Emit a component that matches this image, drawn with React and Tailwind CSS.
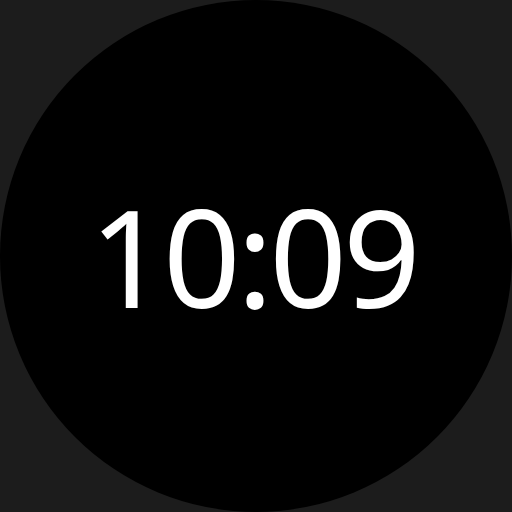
export default function App() {
  return (
    <div className="w-[512px] h-[512px] bg-[#1c1c1c] flex items-center justify-center">
      <div className="w-[512px] h-[512px] rounded-full bg-black flex items-center justify-center">
        <span className="text-white text-[136px] leading-none font-normal tracking-[-4px] pr-[6px]" style={{ fontFamily: '"Noto Sans", sans-serif' }}>10:09</span>
      </div>
    </div>
  );
}
